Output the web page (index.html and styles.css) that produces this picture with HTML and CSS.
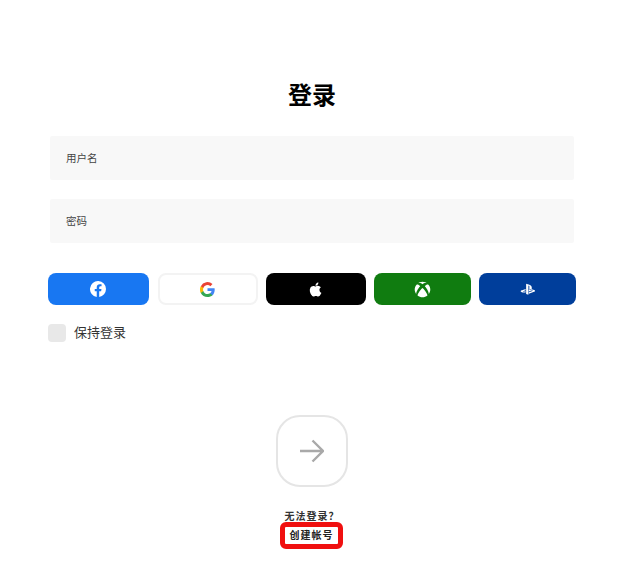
FILE: index.html
```html
<!DOCTYPE html>
<html lang="zh-CN">
<head>
    <title>登录</title>
    <link rel="stylesheet" href="styles.css">
</head>
<body>
    <div class="login">
        <h1>登录</h1>
        <form class="fields">
            <div class="field">用户名</div>
            <div class="field">密码</div>
        </form>
        <div class="providers">
            <a class="provider facebook" href="#!">
                <svg viewBox="0 0 24 24" width="16" height="16"><path fill="#fff" d="M24 12a12 12 0 1 0-13.900 11.900v-8.400H7.100V12h3V9.400c0-3 1.800-4.700 4.500-4.700 1.300 0 2.700.2 2.700.2v3h-1.500c-1.500 0-2 .9-2 1.900V12h3.400l-.5 3.500h-2.900v8.400A12 12 0 0 0 24 12z"/></svg>
            </a>
            <a class="provider google" href="#!">
                <svg viewBox="0 0 24 24" width="15" height="15">
                    <path fill="#4285f4" d="M23.500 12.300c0-.9-.1-1.700-.2-2.500H12v4.700h6.500a5.500 5.500 0 0 1-2.400 3.600v3h3.900c2.300-2.100 3.500-5.200 3.500-8.800z"/>
                    <path fill="#34a853" d="M12 24c3.200 0 6-1.100 8-2.900l-3.900-3c-1.100.7-2.500 1.200-4.100 1.200-3.100 0-5.800-2.100-6.700-5H1.300v3.100A12 12 0 0 0 12 24z"/>
                    <path fill="#fbbc05" d="M5.300 14.300a7.200 7.200 0 0 1 0-4.600V6.600h-4a12 12 0 0 0 0 10.800l4-3.100z"/>
                    <path fill="#ea4335" d="M12 4.800c1.800 0 3.300.6 4.600 1.800L20 3.200A12 12 0 0 0 1.300 6.600l4 3.100c.9-2.800 3.600-4.900 6.700-4.900z"/>
                </svg>
            </a>
            <a class="provider apple" href="#!">
                <svg viewBox="0 0 24 24" width="17" height="17"><path fill="#fff" d="M17.500 12.700c0-2.500 2-3.700 2.100-3.800-1.200-1.700-3-1.900-3.600-2-1.500-.2-3 .9-3.800.9-.8 0-2-.9-3.300-.9-1.700 0-3.300 1-4.100 2.500-1.800 3-.5 7.600 1.200 10.100.9 1.200 1.900 2.600 3.200 2.500 1.300 0 1.800-.8 3.300-.8s2 .8 3.300.8c1.400 0 2.300-1.200 3.100-2.500 1-1.400 1.400-2.800 1.400-2.900-.1 0-2.800-1.100-2.800-4.400zM15 5.300c.7-.9 1.200-2 1.100-3.200-1 0-2.300.7-3 1.500-.6.8-1.200 2-1.100 3.100 1.200.1 2.300-.6 3-1.400z"/></svg>
            </a>
            <a class="provider xbox" href="#!">
                <svg viewBox="0 0 24 24" width="17" height="17"><path fill="#fff" d="M5.300 3.600C7.100 2.100 9.400 1 12 1s4.900 1.100 6.700 2.600c-2.200-1.200-5-.5-6.700 1.100-1.700-1.600-4.500-2.300-6.700-1.100zM3.700 5.300C1.900 7.200 1 9.600 1 12c0 2.300.8 4.500 2.200 6.300-.3-3.700 4.100-9.500 5.500-11C7.300 5.800 5 4.600 3.700 5.300zM20.300 5.300c1.800 1.900 2.700 4.300 2.700 6.700 0 2.300-.8 4.500-2.200 6.300.3-3.700-4.100-9.500-5.500-11 1.400-1.500 3.700-2.700 5-2zM12 9.800c-2 1.700-6.700 7.300-7 10.700C7 22.100 9.400 23 12 23s5-.9 7-2.500c-.3-3.400-5-9-7-10.700z"/></svg>
            </a>
            <a class="provider playstation" href="#!">
                <svg viewBox="0 0 24 24" width="16" height="16"><path fill="#fff" d="M9.200 4.200v15.300l3.400 1.100V7.800c0-.6.300-1 .7-.9.600.2.700.7.700 1.300v5.100c2.100 1 3.700 0 3.700-2.700 0-2.800-1-4-3.800-5-1.100-.4-3.200-1-4.700-1.400zM13.300 16.900l5.500-2c.6-.2.700-.5.200-.7-.5-.2-1.400-.1-2 .1l-3.700 1.300v-2l.2-.1s1.100-.4 2.600-.6c1.500-.2 3.400 0 4.900.6 1.600.5 1.800 1.300 1.400 1.800-.4.500-1.400.9-1.400.9l-7.700 2.800zM2.600 16.700c-1.700-.5-2-1.500-1.200-2.100.7-.5 2-.9 2-.9l5-1.800v2l-3.600 1.300c-.6.200-.7.500-.2.700.5.200 1.400.1 2-.1l1.800-.6v1.800l-.4.1c-1.800.3-3.700.2-5.400-.4z"/></svg>
            </a>
        </div>
        <label class="remember">
            <span class="checkbox"></span>
            保持登录
        </label>
        <button class="submit" type="button">
            <svg viewBox="0 0 24 24" width="24" height="24" fill="none" stroke="#a9a9a9" stroke-width="2.400"><path d="M0 12h23M12.500 1.500 23 12 12.500 22.500"/></svg>
        </button>
        <div class="help">无法登录？</div>
        <a class="create" href="#!">创建帐号</a>
    </div>
</body>
</html>
```

FILE: styles.css
```css
body {
    font-family: "Liberation Sans", "Noto Sans CJK SC", sans-serif;
    margin: 0;
    background-color: white;
    color: #111;
}
.login {
    display: flex;
    flex-direction: column;
    align-items: center;
    padding: 79px 46px 0 48px;
}
h1 {
    margin: 0;
    font-size: 24px;
    line-height: 34px;
    color: #000;
}
.fields {
    align-self: stretch;
    display: flex;
    flex-direction: column;
    gap: 19px;
    margin: 23px 2px 0;
}
.field {
    height: 44px;
    line-height: 44px;
    padding-left: 16px;
    border-radius: 2px;
    background-color: #f8f8f8;
    color: #444;
    font-size: 10.500px;
}
.providers {
    align-self: stretch;
    display: grid;
    grid-template-columns: 102fr 100fr 100fr 97fr 97fr;
    gap: 8px;
    margin-top: 30px;
}
.provider {
    height: 32px;
    display: flex;
    align-items: center;
    justify-content: center;
    box-sizing: border-box;
    border-radius: 8px;
}
.facebook {
    margin-right: 1px;
    padding-right: 1px;
    background-color: #1877f2;
}
.google {
    padding-right: 2px;
    background-color: white;
    border: 2px solid #f3f3f3;
}
.apple {
    padding-right: 2px;
    background-color: #000;
}
.xbox {
    background-color: #107c10;
}
.playstation {
    background-color: #003e9b;
}
.remember {
    align-self: flex-start;
    display: flex;
    align-items: center;
    gap: 8px;
    margin-top: 19px;
    font-size: 13px;
    line-height: 18px;
    color: #333;
}
.checkbox {
    width: 18px;
    height: 18px;
    border-radius: 4px;
    background-color: #e8e8e8;
}
.submit {
    width: 72px;
    height: 72px;
    margin-top: 73px;
    padding: 0;
    display: flex;
    align-items: center;
    justify-content: center;
    background-color: white;
    border: 2px solid #e5e5e5;
    border-radius: 24px;
}
.help {
    margin-top: 23px;
    font-size: 10px;
    line-height: 13px;
    font-weight: bold;
    letter-spacing: 1px;
    color: #333;
}
.create {
    margin: -1px 2px 0 0;
    padding: 2px 4px 2px 5px;
    border: 5px solid #f01010;
    border-radius: 6px;
    font-size: 10px;
    line-height: 13px;
    font-weight: bold;
    letter-spacing: 1px;
    color: #222;
    text-decoration: none;
}
```
